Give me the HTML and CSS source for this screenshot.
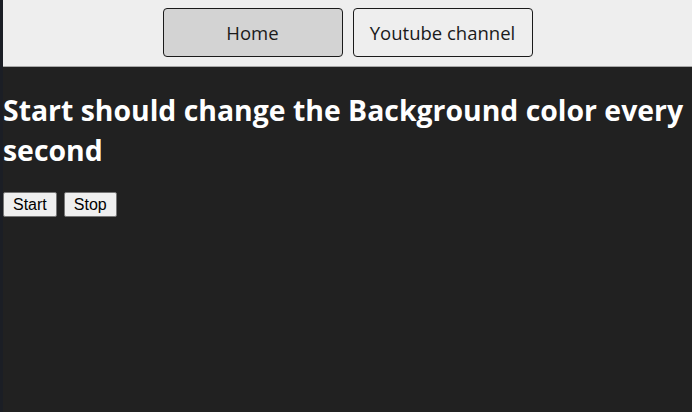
FILE: index.html
```html
<!DOCTYPE html>
<html>
<head>
<meta charset="utf-8">
<link rel="stylesheet" href="styles.css">
</head>
<body>
<nav class="nav">
  <button class="nav-btn nav-btn-active">Home</button>
  <button class="nav-btn">Youtube channel</button>
</nav>
<main class="content">
  <h1 class="title">Start should change the Background color every second</h1>
  <div class="controls">
    <button class="ctrl-btn">Start</button>
    <button class="ctrl-btn">Stop</button>
  </div>
</main>
</body>
</html>
```

FILE: styles.css
```css
html, body {
  margin: 0;
  height: 100%;
}
body {
  background: #212121;
  border-left: 3px solid #1b1e25;
  font-family: "Open Sans", "Noto Sans", sans-serif;
  box-sizing: border-box;
}
.nav {
  background: #eeeeee;
  height: 67px;
  border-bottom: 1px solid #a8a8a8;
  display: flex;
  justify-content: center;
  align-items: flex-start;
  gap: 10px;
  padding-top: 8px;
  box-sizing: border-box;
}
.nav-btn {
  width: 180px;
  height: 49px;
  background: #eeeeee;
  border: 1px solid #1a1a1a;
  border-radius: 4px;
  font-family: "Open Sans", "Noto Sans", sans-serif;
  font-size: 18.5px;
  color: #1a1a1a;
  padding: 0;
}
.nav-btn-active {
  background: #d3d3d3;
}
.content {
  padding: 0;
}
.title {
  margin: 23px 0 0 0;
  color: #ffffff;
  font-size: 28.4px;
  font-weight: 700;
  line-height: 40px;
}
.controls {
  display: flex;
  gap: 7px;
  margin-top: 22px;
}
.ctrl-btn {
  font-family: "Liberation Sans", Arial, sans-serif;
  font-size: 16px;
  background: #efefef;
  border: 1px solid #767676;
  border-radius: 2px;
  padding: 1px 9px;
  height: 25px;
  color: #000;
}
```
